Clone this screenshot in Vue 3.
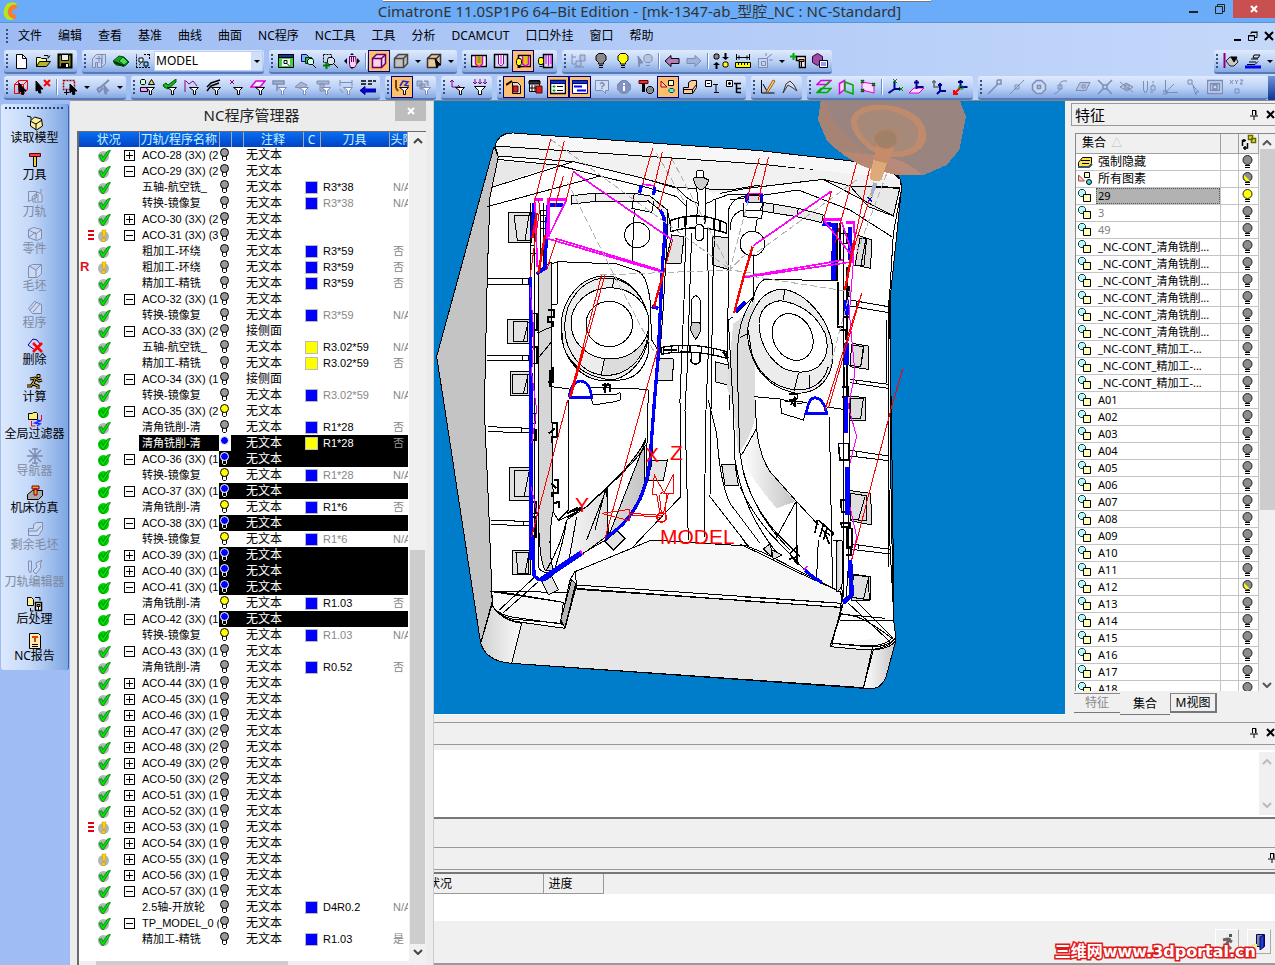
<script setup>
const menus = ['文件', '编辑', '查看', '基准', '曲线', '曲面', 'NC程序', 'NC工具', '工具', '分析', 'DCAMCUT', '口口外挂', '窗口', '帮助']

const D = '#7d8cb4'
const K = '#000'
const P = '#808'
const N = '#000090'
const funnel = (c = K, f = '#fff') => [['M5.5 8.5h9l-3 3v4h-2v-4z', f, c]]
const bulb = (f, s = K) => [['M5.5 .5h5l2.5 2.5v4l-2.5 2.5v1.5h-5v-1.5l-2.5-2.5v-4z', f, s], ['M6 12.5h4M6 14.5h4', 'none', s]]
const cube = (f, s) => [['M1.5 5.5l4-4h9v9l-4 4h-9z', f, s, 1.5], ['M1.5 5.5h9v9M10.5 5.5l4-4', 'none', s, 1.5]]

const icons = {
  new: [['M3.5 1.5h6l4 4v10h-10z', '#fff', K], ['M9.5 1.5v4h4', 'none', K]],
  open: [['M1.5 13.5v-9h4l1 1h5v3', '#ff9', K], ['M1.5 13.5l3-5h11l-4 5z', '#b5b52a', K], ['M9 2.5h4v2M15 2.5l-2 3', 'none', K]],
  save: [['M1.5 1.5h13v13h-13z', '#8a8a1e', K, 2], ['M4.5 1.5h7v6h-7z', '#eee', K], ['M4.5 10.5h7v4h-7z', K, K], ['M9 11h2v3H9z', '#fff', 'none']],
  part: [['M1.5 5.5l4-4h9v9l-4 4h-4v-5h-2v5h-3z', '#c6d4ef', D], ['M4.5 5.5h6v9M8 3v7M11 2v9', 'none', D]],
  green: [['M0 8l6-5 5 1 5 5-4 4-9-1z', '#1c9c1c', '#052'], ['M6 8l4-4 5 5-4 3z', '#4be04b', '#052'], ['M1 9l10 4', 'none', '#030', 2]],
  frames: [['M1.5 14.5v-13M1 14.5h14.5M9 1.5h6M14.5 1v5', 'none', K, 1, '2 1'], ['M4 5h4v4H4z', '#fff', K], ['M9 9h4v4H9z', '#6cf', K], ['M4 12l3-3', 'none', '#060']],
  fit: [['M.5 1.5h15v13H.5z', '#3fd13f', K], ['M.5 1.5h15v3H.5z', '#113a9c', K], ['M4 6h8v7H4z', '#fff', 'none'], ['M6 7.5h3v3H6zM9 10.5l3 3', '#dff', K]],
  zoomPrev: [['M1.5 1.5h5l2 2v5h-7z', '#7db5e8', N], ['M5.5 4.5h6v6h-6z', '#3b3', '#030'], ['M9.5 5.500h3l1 2v3l-1 1h-3l-2-1v-3zM12 11l4 4', '#cfe', K]],
  zoomIn: [['M1.5 1.5h8v8h-8z', 'none', K, 1, '2 1'], ['M6.5 4.5h4l2 2v3l-2 2h-4l-1-2v-3zM12 11l4 4', '#dde', K], ['M1 12.5h7M4.5 9v7', 'none', '#070', 2]],
  pan: [['M5.5 3.5h6l1 8-2 3h-4l-1-3z', '#fbd3f0', '#606'], ['M0 8l3-3v6zM16 8l-3-3v6zM8 0l2 2H6zM8 16l2-2H6z', K, 'none'], ['M7.5 4v5M9.5 4v5', 'none', '#606']],
  wire: cube('#fbd3f0', '#606'),
  shade: cube('#c2c2c2', '#444'),
  viewCube: [...cube('#e8c89c', '#333'), ['M9 6l6 6h-3l-1 3z', K, K]],
  lib1: [['M.5 2.5h15v11H.5z', '#fff', K, 1.5], ['M4.5 3v8l3.5 3 3.5-3V3', '#e0c800', '#d0d', 1.5], ['M6.500 3h3v7h-3z', '#999920', 'none']],
  lib2: [['M1.5 1.5h13v13h-13z', '#d8d8ff', K, 1.5], ['M5.5 2v9l2.5 2 2.5-2V2', '#fff', P], ['M8 2v9', 'none', '#d0d']],
  lib3: [['M3.5 2.5h12v11h-12z', '#fff', K, 1.5], ['M7.5 3v8l3 2 3-2V3', '#e0c800', '#d0d', 1.5], ['M2.5 5.5h3l1 2v3l-1 2h-3l-1-2v-3z', '#ff0', K], ['M2.5 14.5h3', 'none', K]],
  lib4: [['M6.5 1.5h9v13h-9z', '#d8d8ff', K, 1.5], ['M9 2v9M11.5 2v11M14 2v9', 'none', '#d0d'], ['M2.5 4.5h3l1 2v3l-1 2h-3l-1-2v-3z', '#ff0', K], ['M2.5 13.5h3', 'none', K]],
  treeOff: [['M1 1v10h6M1 4h4M3 14h10', 'none', D], ['M9 2h5v6H9zM5 8h5v5H5z', '#b8c4de', D]],
  bulbGray: bulb('#888'),
  bulbOn: bulb('#ff0'),
  pickOff: [['M1 3l5 7H3l-1 4z', D, D], ['M9 1.5h4l2 2v4l-2 2H9l-2-2v-4z', '#b8c4de', D], ['M9 12.5h4', 'none', D]],
  back: [['M1 8l6-5.5v3h8v5H7v3z', '#b97abb', K]],
  fwd: [['M15 8L9 2.5v3H1v5h8v3z', '#9eb4dc', D]],
  swap: [['M2 1h3l1 1v3l-1 1H2L1 5V2z', '#888', K], ['M11 9h3l1 1v3l-1 1h-3l-1-1v-3z', '#ff0', K], ['M12.5 0v4M3.5 12v4', 'none', K, 2], ['M9 4h7l-3.5 3zM0 12h7l-3.5-3z', K, 'none']],
  measure: [['M1.5 1v6M14.5 1v6M1 4.5h14M4 2.5v4M12 2.5v4', 'none', K], ['M.5 9.5h15v5H.5z', '#ff0', K], ['M3.5 10v2M6.5 10v2M9.5 10v2M12.5 10v2', 'none', K]],
  explodeOff: [['M1.5 5.5h9v9h-9zM4.5 8.5h4v4h-4z', '#c6d4ef', D], ['M10 5l5-4M12 7h4M9 3V0', 'none', D]],
  addTool: [['M3.5 0v7M0 3.5h7', 'none', '#0a0', 2], ['M6.5 3.5h9v11h-6v-7h-3z', '#eee', K, 1.5], ['M9 6.5h5v2H9zM11.5 9v5', '#f80', K]],
  assyList: [['M.5 3.5l5-3 5 3v6l-5 3-5-3z', '#a04aa8', '#303'], ['M7.5 7.5h8v7h-8z', '#fff', K], ['M9 10h5M9 12h5', 'none', '#33f']],
  mirror: [['M1.5 0v15', 'none', P, 2], ['M3 8l4-4 6 1 2 4-4 4H7z', '#c9c9c9', '#222'], ['M8 4h6l-3 5z', K, K]],
  layers: [['M9 2h6l-2 3H8zM6 6h7M4 9h7M2 11.5h8l3-3', 'none', K], ['M0 14h16', 'none', '#00f', 3]],
  selBox: [['M1.5 5.5l4-4h9v9l-4 4h-9zM1.5 5.5h9v9M10.5 5.5l4-4M5.5 2v9h9', 'none', '#f00'], ['M6 4l7 8h-3l1 3-2 1-1-4-2 2z', K, K]],
  unselect: [['M1 2l7 8H5l1 4-2 0-1-3-2 1z', K, K], ['M9 1l6 6M15 1L9 7', 'none', '#f00', 2]],
  selRect: [['M1.5 1.5h11v9h-11z', 'none', '#900', 1.5, '2 1'], ['M8 5l7 7h-3l1 3-2 1-1-4-2 2z', K, K], ['M2 13.5h5M4.5 11v5', 'none', K]],
  curveOff: [['M2 10l4-2 8-7M2 10l2 3 4-4', 'none', D, 2], ['M9 6l5 6h-3l1 3-2 0-1-4z', D, D]],
  fShapes: [['M1.5 .5h3l1 1v3l-1 1h-3l-1-1v-3z', '#cfc', K], ['M8.5 5.5l3-5 3 5z', '#dd6', K], ['M.5 8.5h7v4h-7z', '#f9f', K], ...funnel()],
  fFace: [['M1 6l3-2 2 2 8-6v3l-8 7-4-2z', '#1b1', '#050'], ...funnel()],
  fEdge: [['M1 1v12M2 2l3 3 4-3 4 5', 'none', P], ...funnel()],
  fCurve: [['M1 8l4-4 9-3M1 12l4-5 8-3', 'none', K, 1.5], ...funnel()],
  fPoint: [['M2 1l4 4M6 1L2 5', 'none', P], ...funnel()],
  fPlane: [['M6 2h9l-5 6H1z', '#ffe8ff', '#d0d', 1.5], ...funnel()],
  fG1: [['M1 2h11v3H1zM5 5v7', '#aab6d2', D, 1.5], ...funnel(D)],
  fG2: [['M1 8l6-5 6 3-3 4z', '#aab6d2', D], ...funnel(D)],
  fG3: [['M1 2h12v3H1zM4 5h4v7H4z', '#aab6d2', D], ...funnel(D)],
  fG4: [['M2 1v6M14 1v6M2 3.5h12M2 10l3 4', 'none', D], ...funnel(D)],
  fArrow: [['M1 2h5M8 2h4M13 2h3M1 5h5M8 5h4', 'none', K, 1.5], ['M0 11.5l5-4v2.5h11v3H5v2.5z', '#00d', N]],
  nc1: [['M2 1v8M2 9l2 3', 'none', '#740', 2], ['M6 7l3-5 5 1-3 3 4 1', 'none', '#22c', 1.5], ...funnel()],
  nc2: [['M1 2h5v5H1zM4 5h5v5H4zM8 2h4v5', '#aab6d2', D], ...funnel(D)],
  fUcs: [['M2 1v7h8M0 3l2-2 2 2M8 6l2 2-2 2', 'none', P], ...funnel()],
  fPts: [['M3 0v5M8 0v5M13 0v5M1 3l2 2 2-2M6 3l2 2 2-2M11 3l2 2 2-2', 'none', P], ['M2.5 7.5h11l-4 4v4h-3v-4z', '#fff', K]],
  toolWiz: [['M6.5 3.5h5l3 3v8h-8z', '#ddd', K], ['M0 6l6-4', 'none', K, 2], ['M7 7h5v6H7z', '#c22', '#600']],
  calc: [['M1.5 1.5h10v11h-10z', '#fff', K], ['M1 2h11v3H1z', '#334', K], ['M4 6v6M7 6v6M2 9h9', 'none', K], ['M8 7h6v7H8z', '#c22', '#600']],
  list: [['M.5 1.5h15v13H.5z', '#fff', K, 1.5], ['M.5 1.5h15v3H.5z', '#113aa0', N], ['M3 7h2v1H3zM3 11h2v1H3z', '#0a0', '#0a0'], ['M7 7.5h6M7 11.5h6', 'none', K]],
  bars: [['M.5 1.5h15v13H.5z', '#fff', N], ['M.5 1.5h15v3H.5z', '#113aa0', N], ['M2 7.5h8M5 11.5h9', 'none', '#00f', 2]],
  help: [['M1.5 1.5h13v10h-3v3l-3-3h-7z', '#cfdcf4', D], ['M6 5l2-1.5 2 1.5v1L8 7.5v1M8 9v1', 'none', D, 1.5]],
  info: [['M5.5 1.5h5l4 4v5l-4 4h-5l-4-4v-5z', '#7f92c2', D], ['M8 4v2M8 7v5', 'none', '#fff', 2]],
  toolGear: [['M1 1.5h9v3H1z', '#d33', '#600'], ['M5.5 5v8', 'none', K, 3], ['M10.5 7.5h3l2 2v3l-2 2h-3l-2-2v-3z', '#888', K]],
  shapes: [['M1 2v6h6z', '#fcc', '#a00'], ['M8.5 1.5h5v5h-5z', '#ffb', K], ['M10 9.5h3l1 1v2l-1 1h-3l-1-1v-2z', '#6ee', '#044']],
  solid: [['M1.5 8.5h5v-5l3-2h5v7l-4 6h-9z', '#fc9', K], ['M1.5 10.5h9l4-5M10.5 10v4', 'none', K]],
  treeMinus: [['M1.5 1.5h6v6h-6z', '#fff', K], ['M3 4.5h3M9 5.5h5M12 6v8M10 13.5h5', 'none', K]],
  treePlus: [['M.5 1.5h6v6h-6z', '#fff', K], ['M2 4.5h3M3.5 3v3M8 4.5h7M10.5 4v10M11 9.5h4M11 13.5h4', 'none', K, 1.5]],
  sketch: [['M1.5 1v13h13', 'none', K], ['M3 5l4 7 4-6', 'none', K], ['M6 13l7-12 2 1-7 11z', '#fd6', '#a50']],
  comp: [['M1 14l3-9 4-3 4 4 3 6-4-3-5-3z', '#dde', '#333']],
  pl1: [['M5 1.5h10l-4 4H1z', 'none', '#d0d', 1.5], ['M5 9.5h10l-4 4H1zM14 2L3 13', 'none', '#0a0', 1.5]],
  pl2: [['M1.5 4.5l5-3v9l-5 4z', '#fdf', '#d0d', 1.5], ['M7 3l8 3v9l-8-3z', 'none', '#0a0', 1.5]],
  pl3: [['M2 3l12 2v9L2 11z', '#fdf', '#d0d'], ['M1 1l3 3M4 1L1 4M12 4l3 3M15 4l-3 3M1 10l3 3M4 10l-3 3', 'none', '#050', 1.5]],
  ucs1: [['M7.5 10V2M7.5 10h7M7.5 10l-6 4', 'none', N, 2], ['M6 0l4 4M10 0L6 4M12 8l4 4M16 8l-4 4', 'none', '#080']],
  ucs2: [['M5 9h10l-5 5H0z', '#fdf', '#d0d'], ['M7.5 10V1M7.5 8h7M5 3.5h5', 'none', N, 2]],
  ucs3: [['M3 1v7h6M1 3h4', 'none', '#666', 1.5], ['M9 4v8h6M7 6h4M9 12l-3 3', 'none', N, 2]],
  ucs4: [['M7.5 9V1M7.5 8h7M5 3h5', 'none', N, 2], ['M7 9l-6 6M1 11v4h4', 'none', '#f00', 2], ['M6 7h4v3H6z', 'none', '#080']],
  p1: [['M1 15L11 5M11 1h3v4h-4v-3z', 'none', D, 1.5]],
  p2: [['M1 15L15 1M6 6h4v4H6z', 'none', D]],
  p3: [['M5.5 1.5h5l4 4v5l-4 4h-5l-4-4v-5zM6.5 6.5h3v3h-3z', '#c8d7f2', D, 1.5]],
  p4: [['M1 15q7-2 6-8t7-5M5 6h4v4H5z', 'none', D]],
  p5: [['M5 3.5h10l-4 8H1zM7 6h3v3H7z', '#b6c4e0', D]],
  p6: [['M1 1l5 5M15 1l-5 5M1 15l5-5M15 15l-5-5M6 6h4v4H6z', 'none', D, 1.5]],
  p7: [['M1 8l6-4 7 4-6 4zM1 3l13 10M6 6h4v4H6z', '#b6c4e0', D]],
  p8: [['M2.5 2v9l2 3 2-3V2M12 2v2M12 5v2M10 7h4v4h-4zM9 13h3', 'none', D]],
  p9: [['M2.5 14V1M2 13.5h13M3 13L11 5M0 12h4v3H0z', 'none', D]],
  p10: [['M3 1h4v4H3zM7 5l2 2M8 7l6 6h-3v3z', 'none', D]],
  p11: [['M.5 1.5h15v13H.5zM3.5 4.5h9v7h-9zM6 6h4v4H6z', '#c8d7f2', D, 1.5]],
  p12: [['M1 1l3 4M4 1L1 5M6 1l1.5 2L9 1M7.5 3v2M11 1h3l-3 4h3M6 10h4v4H6z', 'none', D]],
  readModel: [['M3.5 6l4-4 7 2 1 7-6 4-6-4z', '#ffef9a', K], ['M3 6l6 3 6-4M9 9v6M0 1l4 1v3', 'none', K]],
  cutter: [['M2.5 1.5h11v3h-11z', '#e44', '#600'], ['M6.5 4.5h3v10h-3z', '#fc3', K]],
  tpOff: [['M1.5 2.5h8v6l-8 4zM5 8l6-5 4 3v7H6z', '#ccd9f1', D], ['M8 5v7M11 5v7M14 0v4', 'none', D]],
  partOff: [['M1.5 3.5l5-2 8 2v9l-5 2-8-3z', '#ccd9f1', D], ['M2 4l7 4 5-4M9 8v6M2 11l7-5', 'none', D]],
  stockOff: [['M1.5 3.5l4-2h9v9l-4 4h-9zM2 3l7 4 5-5M9 7v7', '#ccd9f1', D]],
  procOff: [['M1.5 8.5l6-7 7 3v9h-9zM3 10l7-8M6 12l7-8', '#ccd9f1', D]],
  del: [['M1 8l5-6 4 1 3 4-5 6z', '#cfd6ff', N], ['M6 6l9 9M15 6l-9 9', 'none', '#f00', 2.5]],
  run: [['M10 .5h3v3h-3z', '#fc3', K], ['M3 5l5-1 4 3 3-1M8 5l-2 5 5 2v3M6 9l-2 3H0', 'none', K, 3], ['M3 5l5-1 4 3 3-1M8 5l-2 5 5 2v3M6 9l-2 3H0', 'none', '#fb2', 1]],
  gfilter: [['M1.5 2.5h4l1-1h3l1 1v6h-9z', '#ffef70', K], ['M14.5 4v5l-4 1M4.5 10v5h4', 'none', '#f00'], ['M10 9l3 1-5 2 5 1-3 2', 'none', '#22f', 1.5]],
  navOff: [['M8 0v16M0 8h16M2 2l12 12M14 2L2 14M5 1h6M5 15h6', 'none', D, 1.5]],
  sim: [['M.5 9.5l5-4h10v5l-4 4H.5z', '#aaa', K], ['M5 1h7v3H5zM7 4h3v6H7z', '#f93', '#700']],
  restOff: [['M1.5 6.5h5v-4l3-2h6v7l-4 6h-10zM2 9h8l4-5', '#ccd9f1', D]],
  tpEdit: [['M1.5 2v9l2 3 1-3V2zM6 12l4-4-1-4 6-3-2 4 1 3-5 7z', '#ccd9f1', D]],
  post: [['M.5 1.5h4l2 2v6h-6z', '#ffef90', K], ['M8 1.5h5v3M3.5 12v3h3', 'none', K], ['M8.5 6.5h6v8h-6z', '#fff', K, 1.5], ['M10 8.5h3v2h-3zM11.5 11v3', '#f60', K]],
  report: [['M2.5 .5h9l2 2v13h-11z', '#ffe9b5', K], ['M5 4h6M8 4v5', 'none', '#d40', 2], ['M5 11.5h6M5 13.5h6', 'none', K]],
}

const b = (i, label, active = false) => ({ t: 'b', i, label, active })
const dd = { t: 'd' }
const sep = { t: 's' }
const row1 = [
  [b('new', '新建'), b('open', '打开'), b('save', '保存')],
  [b('part', '零件'), b('green', '曲面模型'), b('frames', '坐标系'), { t: 'select' }],
  [b('fit', '适合窗口'), b('zoomPrev', '上一视图'), b('zoomIn', '放大'), b('pan', '平移'), sep, b('wire', '线框', true), b('shade', '着色'), dd, b('viewCube', '视角'), dd],
  [b('lib1', '显示一'), b('lib2', '显示二'), b('lib3', '显示三', true), b('lib4', '显示四')],
  [b('treeOff', '树'), b('bulbGray', '隐藏'), b('bulbOn', '显示'), b('pickOff', '拾取'), sep, b('back', '后退'), b('fwd', '前进'), sep, b('swap', '切换'), b('measure', '测量'), b('explodeOff', '炸开'), dd, b('addTool', '添加刀具'), b('assyList', '清单')],
]
const row1End = [b('mirror', '镜像'), b('layers', '图层'), dd]
const row2 = [
  [b('selBox', '选择'), b('unselect', '取消选择'), sep, b('selRect', '框选'), dd, b('curveOff', '曲线'), dd],
  ['fShapes', 'fFace', 'fEdge', 'fCurve', 'fPoint', 'fPlane', 'fG1', 'fG2', 'fG3', 'fG4', 'fArrow'].map((k, n) => b(k, '过滤 ' + (n + 1))),
  [b('nc1', '刀轨过滤', true), b('nc2', '毛坯过滤')],
  [b('fUcs', '坐标过滤'), b('fPts', '点过滤')],
  [b('toolWiz', '向导', true), b('calc', '计算表'), b('list', '列表', true), b('bars', '进程', true), b('help', '帮助'), b('info', '信息'), b('toolGear', '刀具设置'), b('shapes', '集合', true), b('solid', '实体'), b('treeMinus', '折叠'), b('treePlus', '展开')],
  [b('sketch', '草图'), b('comp', '复合曲线')],
  [b('pl1', '平行面'), b('pl2', '主平面'), b('pl3', '三点面'), sep, b('ucs1', '坐标一'), b('ucs2', '坐标二'), b('ucs3', '坐标三'), b('ucs4', '坐标四')],
]
const row2End = Array.from({ length: 12 }, (_, n) => b('p' + (n + 1), '捕捉 ' + (n + 1)))

const palette = [
  ['readModel', '读取模型'], ['cutter', '刀具'], ['tpOff', '刀轨', 1], ['partOff', '零件', 1], ['stockOff', '毛坯', 1],
  ['procOff', '程序', 1], ['del', '删除'], ['run', '计算'], ['gfilter', '全局过滤器'], ['navOff', '导航器', 1],
  ['sim', '机床仿真'], ['restOff', '剩余毛坯', 1], ['tpEdit', '刀轨编辑器', 1], ['post', '后处理'], ['report', 'NC报告'],
]

const G = '#9a9a9a', Y = '#ff0', B = '#00f'
const grp = (t, n, c, x = {}) => ({ toggle: t, name: 'ACO-' + n + ' (3X) (' + c, ...x })
const op = (name, tool, holder, x = {}) => ({ name, tool, holder, sw: B, ...x })
const M5 = '五轴-航空铣_', MC = '转换-镜像复', CJ = '粗加工-环绕', JJ = '精加工-精铣', QJ = '清角铣削-清'
const sel = { green: 1, sel: 1, bulb: B }
const yel = { green: 1, bulb: Y }
const rows = [
  grp('+', 28, 2), grp('-', 29, 2), op(M5, 'R3*38', 'N/A'), op(MC, 'R3*38', 'N/A', { dim: 1 }), grp('+', 30, 2),
  grp('-', 31, 3, { warn: 1, mark: 'bars' }), op(CJ, 'R3*59', '否'), op(CJ, 'R3*59', '否', { warn: 1, mark: 'R' }), op(JJ, 'R3*59', '否'),
  grp('-', 32, 1), op(MC, 'R3*59', 'N/A', { dim: 1 }),
  grp('-', 33, 2, { note: '接侧面' }), op(M5, 'R3.02*59', 'N/A', { sw: Y }), op(JJ, 'R3.02*59', '否', { sw: Y }),
  grp('-', 34, 1, { note: '接侧面' }), op(MC, 'R3.02*59', 'N/A', { dim: 1 }),
  grp('-', 35, 2, yel), op(QJ, 'R1*28', '否'), op(QJ, 'R1*28', '否', { ...sel, sw: Y, full: 1 }),
  grp('-', 36, 1, sel), op(MC, 'R1*28', 'N/A', { ...yel, dim: 1 }),
  grp('-', 37, 1, sel), op(QJ, 'R1*6', '否', yel),
  grp('-', 38, 1, sel), op(MC, 'R1*6', 'N/A', { ...yel, dim: 1 }),
  grp('+', 39, 1, sel), grp('+', 40, 1, sel), grp('-', 41, 1, sel), op(QJ, 'R1.03', '否', yel),
  grp('-', 42, 1, sel), op(MC, 'R1.03', 'N/A', { ...yel, dim: 1 }),
  grp('-', 43, 1), op(QJ, 'R0.52', '否'),
  grp('+', 44, 1), grp('+', 45, 1), grp('+', 46, 1), grp('+', 47, 2), grp('+', 48, 2), grp('+', 49, 2), grp('+', 50, 2),
  grp('+', 51, 1), grp('+', 52, 1), grp('+', 53, 1, { warn: 1, mark: 'bars' }), grp('+', 54, 1), grp('+', 55, 1, { warn: 1 }), grp('+', 56, 1),
  grp('-', 57, 1), op('2.5轴-开放轮', 'D4R0.2', 'N/A'),
  { toggle: '-', name: 'TP_MODEL_0 (' }, op(JJ, 'R1.03', '是'),
]

const sets = [
  { n: '强制隐藏', k: 'box', cjk: 1 }, { n: '所有图素', k: 'all', cjk: 1, half: 1 },
  { n: '29', on: 1, s: 1 }, { n: '3', dim: 1 }, { n: '49', dim: 1 },
  ...Array.from({ length: 6 }, () => ({ n: '_NC-CONT_清角铣削...' })),
  ...Array.from({ length: 3 }, () => ({ n: '_NC-CONT_精加工-...' })),
  ...Array.from({ length: 18 }, (_, i) => ({ n: 'A' + String(i + 1).padStart(2, '0'), half: i === 11 })),
]
</script>

<template>
  <div class="app">
    <header class="title">
      <span class="tip"></span>
      <svg class="logo" viewBox="0 0 15 18"><path d="M13 3Q5 0 3 8t7 9" fill="none" stroke="#b6e61e" stroke-width="4" /><path d="M14 5Q8 4 7 9t6 6" fill="none" stroke="#ff7a2a" stroke-width="4" /></svg>
      <h1>CimatronE 11.0SP1P6 64–Bit Edition - [mk-1347-ab_型腔_NC : NC-Standard]</h1>
      <button class="wb" aria-label="最小化"><svg viewBox="0 0 12 12"><path d="M1 9h9" stroke="#222" stroke-width="2" /></svg></button>
      <button class="wb" aria-label="还原"><svg viewBox="0 0 12 12"><path d="M1.5 3.5h7v7h-7zM3.5 3V1.5h7v7H9" fill="none" stroke="#222" /></svg></button>
      <button class="wb close" aria-label="关闭"><svg viewBox="0 0 12 12"><path d="M3 3l6 6M9 3l-6 6" stroke="#fff" stroke-width="2" /></svg></button>
    </header>

    <nav class="menu">
      <i class="grip"></i>
      <button v-for="m in menus" :key="m">{{ m }}</button>
      <span class="mdi">
        <button aria-label="最小化文档"><svg viewBox="0 0 12 12"><path d="M3 10h7" stroke="#000" stroke-width="2" /></svg></button>
        <button aria-label="还原文档"><svg viewBox="0 0 12 12"><path d="M1.5 5.5h6v5h-6zM1 6h7M4 4V2.5h6v5H8M4 2h7" fill="none" stroke="#000" /></svg></button>
        <button aria-label="关闭文档"><svg viewBox="0 0 12 12"><path d="M2 2l8 8M10 2l-8 8" stroke="#000" stroke-width="2" /></svg></button>
      </span>
    </nav>

    <div v-for="(bar, bi) in [{ g: row1, e: row1End }, { g: row2, e: row2End }]" :key="bi" class="bar">
      <div v-for="(g, gi) in [...bar.g, bar.e]" :key="gi" class="group" :class="{ last: gi === bar.g.length && bi === 0, fill: gi === bar.g.length && bi === 1 }">
        <i class="grip"></i>
        <template v-for="(x, xi) in g" :key="xi">
          <button v-if="x.t === 'b'" class="tb" :class="{ active: x.active }" :aria-label="x.label">
            <svg viewBox="0 0 16 16"><path v-for="(p, pi) in icons[x.i]" :key="pi" :d="p[0]" :fill="p[1]" :stroke="p[2]" :stroke-width="p[3] || 1" :stroke-dasharray="p[4]" /></svg>
          </button>
          <button v-else-if="x.t === 'd'" class="drop" aria-label="更多"></button>
          <i v-else-if="x.t === 's'" class="sep"></i>
          <span v-else class="combo"><select aria-label="坐标系"><option>MODEL</option></select></span>
        </template>
      </div>
      <button v-if="bi === 1" class="overflow" aria-label="工具栏选项"></button>
    </div>

    <main class="work">
      <aside class="side">
        <div class="palette">
          <i class="hgrip"></i>
          <button v-for="p in palette" :key="p[1]" :class="{ off: p[2] }">
            <svg viewBox="0 0 16 16"><path v-for="(q, qi) in icons[p[0]]" :key="qi" :d="q[0]" :fill="q[1]" :stroke="q[2]" :stroke-width="q[3] || 1" /></svg>
            <span>{{ p[1] }}</span>
          </button>
        </div>
      </aside>

      <section class="manager">
        <div class="mtitle"><h2>NC程序管理器</h2><button aria-label="关闭管理器"><svg viewBox="0 0 12 12"><path d="M3 3l6 6M9 3l-6 6" stroke="#fff" stroke-width="2" /></svg></button></div>
        <div class="mbody">
          <div class="mscroll">
            <div class="tree">
              <table class="ops">
                <colgroup><col class="c1"><col class="c2"><col class="c3"><col class="c4"><col class="c5"><col class="c6"><col class="c7"><col></colgroup>
                <thead><tr><th>状况</th><th class="l">刀轨/程序名称</th><th></th><th></th><th>注释</th><th>C</th><th>刀具</th><th class="l">头阶</th></tr></thead>
                <tbody>
                  <tr v-for="(r, i) in rows" :key="i" :class="{ sel: r.sel, full: r.full }">
                    <td class="st">
                      <div>
                        <span class="mark"><b v-if="r.mark === 'R'">R</b><svg v-else-if="r.mark" viewBox="0 0 8 12"><path d="M1 2h6M1 6h6M1 10h6" stroke="#e00010" stroke-width="2" /></svg></span>
                        <svg class="stat" viewBox="0 0 15 15">
                          <circle cx="6.5" cy="8.5" r="5.5" :fill="r.green ? '#00d000' : '#b4b4b4'" />
                          <path v-if="r.warn" d="M5 2h4l-1 7H6zM5 10.5h3v3H5z" fill="#ffd800" stroke="#b89000" stroke-width=".5" />
                          <path v-else d="M2 7.5l2.5-1 1.5 3 4.5-6.5 3-.5-7 11h-1.5z" fill="#00e800" stroke="#007a10" stroke-width=".8" />
                        </svg>
                        <button v-if="r.toggle" class="tog" :aria-label="r.toggle === '+' ? '展开' : '折叠'"><svg viewBox="0 0 11 11"><path :d="r.toggle === '+' ? 'M.5 .5h10v10H.5zM2 5.5h7M5.5 2v7' : 'M.5 .5h10v10H.5zM2 5.5h7'" fill="#fff" stroke="#000" /></svg></button>
                      </div>
                    </td>
                    <td class="nm">{{ r.name }}</td>
                    <td class="bl"><svg viewBox="0 0 11 14"><path d="M3.5 8h4v3.5l-1 1h-2l-1-1z" :fill="r.sel && !r.full ? '#000' : '#fff'" :stroke="r.sel ? '#fff' : '#000'" /><circle cx="5.5" cy="4.5" r="4" :fill="r.bulb || G" :stroke="r.sel ? '#fff' : '#000'" /></svg></td>
                    <td></td>
                    <td class="nt">{{ r.note || '无文本' }}</td>
                    <td class="sw"><i v-if="r.sw" :class="{ y: r.sw === Y }"></i></td>
                    <td class="tl" :class="{ dim: r.dim }">{{ r.tool }}</td>
                    <td class="hd">{{ r.holder }}</td>
                  </tr>
                </tbody>
              </table>
            </div>
            <div class="vs ms"><svg viewBox="0 0 10 6"><path d="M1 5l4-4 4 4" fill="none" stroke="#444" stroke-width="2" /></svg><i></i><svg viewBox="0 0 10 6"><path d="M1 1l4 4 4-4" fill="none" stroke="#444" stroke-width="2" /></svg></div>
          </div>
          <div class="hs"><i></i></div>
        </div>
      </section>

      <section class="right">
        <div class="upper">
          <div class="canvas">
            <svg viewBox="12 3 1893 1839" preserveAspectRatio="xMinYMin slice" fill="none" stroke="#000" stroke-width="3">
              <defs>
                <linearGradient id="sg"><stop offset="0" stop-color="#fff" /><stop offset="1" stop-color="#c4c4c4" /></linearGradient>
                <linearGradient id="sr"><stop offset="0" stop-color="#d0d0d0" /><stop offset="1" stop-color="#fafafa" /></linearGradient>
              </defs>
              <path d="M192 150Q205 98 250 99L990 152 1370 195Q1410 215 1415 260L1380 600 1380 1000 1390 1550 1398 1620 1367 1735Q1350 1765 1330 1765L1300 1765 245 1690Q165 1675 152 1630L45 930 20 770Z" fill="#fff" />
              <path d="M195 138L990 192 1410 240 1370 195 990 152 250 99Q205 98 195 138Z" fill="#f7f7f7" />
              <path d="M205 140L990 195 1180 212 1410 238 1390 350 1180 240 990 262 850 278 740 262 620 232 430 187 205 170Z" fill="#f1f1f1" stroke="none" />
              <path d="M192 140L205 170 180 290 172 520 163 930 175 1200 187 1510 152 1630 45 930 20 770Z" fill="#c4c4c4" />
              <path d="M205 182L370 196 182 262Z" fill="#e8e8e8" stroke="none" />
              <path d="M185 1510Q205 1560 275 1567L405 1585 437 1465 990 1505 1240 1523 1200 1640 1330 1650Q1385 1645 1398 1620L1367 1735Q1350 1765 1330 1765L245 1690Q165 1675 152 1630Z" fill="#e6e6e6" />
              <path d="M187 1510L152 1630Q170 1685 245 1690L275 1570Q205 1560 187 1510Z" fill="url(#sr)" />
              <path d="M1330 1650L1300 1765H1330Q1350 1765 1367 1735L1398 1620Q1385 1645 1330 1650Z" fill="url(#sg)" />
              <path d="M435 1415L665 1320 950 1338 1000 1358 1150 1435 1232 1475 1240 1510 440 1455Z" fill="#f7f7f7" />
              <path d="M440 1468L1236 1522M435 1415L420 1440 392 1570H405L440 1455M420 1440L440 1465" />
              <path d="M185 1475L400 1507 392 1570 245 1557Q190 1540 187 1510Z" fill="#f7f7f7" />
              <path d="M180 1473L435 1478M180 1473L240 1480 400 1507M208 1530L312 1433M218 1540L325 1445M185 1515Q205 1550 275 1555L400 1573" />
              <path d="M392 1560L425 1440 437 1450 405 1583Z" fill="#b5b5b5" />

              <!-- upper left quadrant -->
              <path d="M208 168L430 185 620 230 740 262Q800 335 850 300L900 282H990M200 178L380 195 510 228 650 262 740 290 770 320M185 262L430 185M172 320L510 228M640 235L730 262 900 270 990 255M205 170L180 290 172 520 163 930 175 1200 187 1510M195 138L205 170" />
              <path d="M425 287L490 280 610 280 660 288 712 330V400L690 330 655 303 490 305 425 312Z" fill="#eee" />
              <path d="M495 280V305M613 280L606 325 665 337 672 303M613 330L606 490M340 500L385 485 560 492 620 512Q650 520 660 600L665 720 690 760" />
              <circle cx="622" cy="405" r="38" />
              <path d="M325 520L340 500 365 487V900L370 1230Q350 1330 370 1415L345 1410Q325 1380 325 1200Z" fill="#d6d6d6" />
              <path d="M365 485V615L382 612V487M365 860L425 868M480 862L655 868M490 882H560Q578 870 570 900L555 905 490 915 482 890Z" />
              <ellipse cx="525" cy="685" rx="132" ry="157" fill="#ececec" /><ellipse cx="530" cy="680" rx="126" ry="146" />
              <path d="M555 640L645 720Q630 820 520 825L525 765Z" fill="#dcdcdc" stroke="none" />
              <ellipse cx="540" cy="670" rx="117" ry="107" fill="#fff" /><ellipse cx="538" cy="672" rx="70" ry="68" />
              <path d="M553 530L547 563M523 777L513 828M395 690L400 740Q430 820 530 838T655 760V670" />
              <g fill="#e2e2e2">
                <path d="M235 337H305V427H235ZM252 345H300V420H262Z" /><path d="M233 657H297V730H233ZM250 665H292V724H250Z" /><path d="M242 813H297V885H242ZM248 822H292V880H248Z" /><path d="M237 1102H300V1202H237ZM252 1110H298V1190H255Z" /><path d="M248 1352H300V1422H248ZM258 1358H296V1420H264Z" />
                <path d="M725 405L762 410 753 490H707ZM848 410L895 412V508L848 495ZM685 775L730 777 728 842H680ZM855 785L895 795V855L855 845ZM665 1083L712 1080 700 1140H655ZM875 1093L915 1095 925 1155H885Z" /><path d="M525 1325L560 1290 585 1315 550 1350ZM335 1445L365 1430 385 1470 355 1485Z" />
              </g>
              <path d="M285 420L298 340M280 724L295 665M280 880L295 822M282 1190L297 1115M285 1420L297 1360" />
              <path d="M172 535H295V552H172M277 535V552M172 765H295V780H172M277 765V780M175 980L300 985V998L175 995M275 985V997M182 1260L300 1265V1278L182 1273M280 1263V1277" />
              <path d="M300 310V1380M313 320V1420M325 520V1400Q330 1420 370 1420M340 310V500M332 330V510M350 330H330M350 345H332M348 365H330M345 385H332M300 435H315M300 460H320M312 540V660M320 700L365 680M320 780L365 725" />
              <path d="M300 640H320V690H300M302 740H320V790H302M300 940H315V970H300M302 990H318V1020H302M300 1205H318V1240H300M303 1250H318V1310H303" stroke-width="5" />
              <path d="M355 630H372V650H355V665H368V680M360 810V860M368 800V845H355M365 970H380V1010H365V1030M357 1000L375 985M372 1140H385V1180H365V1190M365 1150L380 1165M372 1210L388 1205V1225M412 1240L440 1225V1260M412 1252L440 1238M425 1235L455 1225 462 1250 440 1255M420 1260V1278M450 1220V1250M480 1300V1340M490 1310L475 1350 495 1330M470 1345L492 1325M525 850V880M515 855H540V875M520 870L535 850" stroke-width="6" />
              <path d="M415 900V1230L385 1260M648 1015Q620 1080 530 1162L470 1220 385 1262 370 1235" /><path d="M648 1020Q610 1090 530 1162L535 1305 475 1350 370 1420Q400 1330 410 1260L470 1220 530 1165Q620 1080 645 1040L643 1150Q610 1260 535 1310Z" fill="url(#sg)" />
              <path d="M527 1165L495 1290M532 1165V1310M530 1165L470 1320M410 1260Q395 1330 350 1410M440 1250L415 1390M655 870L648 1150Q620 1250 535 1315L340 1430M712 400L700 620 690 760 670 920 665 1100" />

              <!-- centre ridge and ejector pins -->
              <path d="M770 300L762 600 750 900 752 1190 605 1345M785 400L772 800 765 930 775 1320M832 380L837 700 828 930 822 1315M857 300L848 560 843 930 840 1190 955 1338M712 330L720 370M895 350V500L893 760 900 930" />
              <path d="M798 250L805 310 800 350H827V250Z" fill="#fff" /><path d="M790 235Q812 225 836 240Q830 265 812 270Q795 262 790 235Z" fill="#ccc" /><circle cx="810" cy="222" r="12" fill="#fff" />
              <path d="M720 362Q805 330 890 370V400Q805 370 722 395ZM745 352V385M765 348V380M850 355V388M870 362V395M800 345V372M825 345V372" stroke-width="4" /><path d="M795 380Q808 365 820 380V415Q807 430 795 415Z" fill="#fff" />
              <path d="M785 670Q797 660 810 670Q820 690 797 718Q775 690 785 670Z" fill="#ccc" /><path d="M785 600Q797 575 810 600V668H785Z" fill="#fff" />
              <path d="M695 742Q790 725 890 755V775Q790 745 695 762ZM700 742V765M725 738V760M745 737V758M850 745V765M780 738V758M815 738V758M785 760L783 785Q797 800 810 785V760M860 390L892 400" stroke-width="4" />
              <path d="M880 755L893 775M700 750H740" stroke-width="7" />

              <!-- upper right quadrant -->
              <g transform="translate(930 0)">
                <path d="M330 258L480 262 460 348 385 320Z" fill="#e8e8e8" />
                <path d="M-60 280L20 265 250 238 330 258 480 265M-30 300L175 270 330 330 455 410M250 238L460 348M480 240L485 265 460 400 448 600 455 1000 462 1550M-35 395V330Q-20 290 20 288L70 290" />
                <path d="M70 308L100 312 175 325 250 345 245 368 170 350 60 332Z" fill="#e8e8e8" /><path d="M100 312V335M175 325L170 350M10 310V350L65 355 70 310M65 332H15M-30 390Q-30 340 10 330" />
                <path d="M26 285H62V308H26Z" fill="#ddd" stroke-width="4" />
                <path d="M52 356L45 395M40 465V890M75 538L295 542M75 538Q45 550 35 620L25 720M45 585L-10 640" /><circle cx="37" cy="431" r="37" />
                <path d="M45 590Q20 650 -20 670L-40 860 -20 920 -5 1065Q50 980 45 930Z" fill="#dcdcdc" stroke="none" />
                <path d="M-20 650L-35 660 -20 930 -15 1080Q10 1240 120 1370M45 580L15 640Q-5 680 -8 760L-5 930 0 1060Q20 1220 150 1350M0 712L25 700" />
                <path d="M130 567Q70 570 45 625Q10 680 30 750Q60 860 170 880Q250 880 275 800Q290 730 250 660Q200 580 130 567Z" fill="#ececec" />
                <path d="M120 602Q60 610 57 670Q60 760 130 805Q190 830 235 800Q275 760 255 700Q215 615 120 602Z" fill="#fff" /><path d="M25 690L35 760Q70 860 170 870Q245 870 265 800" />
                <ellipse cx="158" cy="711" rx="58" ry="73" transform="rotate(-28 158 711)" /><path d="M135 567L130 600M175 820L162 872M210 825L207 868" />
                <path d="M43 890L120 897 150 905M170 910L200 908M255 920L310 928M120 897L125 940 190 960 200 930M135 905H190" />
                <path d="M295 545L293 680H310V545M310 390V930M320 500V930M300 400H320V430H300M312 560H327V590M313 650H327M312 800V860M300 690H318V720M320 520V560M305 860H325V890H305M300 370V480M290 370V540" stroke-width="5" />
                <path d="M350 405L395 420 392 505 345 495M360 415H380L372 495H345ZM335 730L385 738V808L330 800M335 735L370 740 362 800 330 797ZM325 888L377 893V960H330M330 895H370L362 955H330Z" fill="#ddd" />
                <path d="M362 500L378 415M362 800L372 740M330 600L445 620V638L330 618M350 603V620M330 838L445 853V865L330 848M350 840V850M440 660V850M445 600V1400" />
                <path d="M148 882H172V895L155 905 165 920M152 915L166 890" stroke-width="5" />
              </g>

              <!-- lower right quadrant -->
              <g transform="translate(930 900)">
                <path d="M50 85L5 170Q20 220 110 325L165 305 90 215Q55 150 50 85Z" fill="url(#sg)" stroke="none" />
                <path d="M45 0L50 90Q60 170 90 215L170 305 235 375M50 85L5 165M168 305L105 420M168 305V440M0 260Q30 330 90 400L195 510M10 220Q40 320 110 400L180 470M-95 0L-70 100Q-60 250 -30 310L60 430M235 420L230 530M268 50L275 420 278 565M0 405L20 435" />
                <path d="M0 432L110 485 180 520 300 575L310 610 270 740 380 750Q450 745 465 715M275 730L380 738Q440 738 460 710M305 615L275 738M275 730L300 640 350 650Q400 670 462 720Q430 745 380 740Z" fill="#f7f7f7" />
                <path d="M325 610L450 725M345 600L460 715M300 642L435 655M300 660H462M0 590L305 610M0 602L305 622M305 560Q310 600 300 620M398 740L370 865" />
                <path d="M290 425Q300 415 308 425V540Q305 570 290 575Z" fill="url(#sr)" /><path d="M310 0V590M330 0L325 500 318 600M278 420H295" />
                <path d="M70 447L92 430 95 470ZM95 450L125 465 100 478ZM330 272L392 280 395 375 330 362M330 280L378 287V362L332 358ZM335 522L392 530V600L335 592M340 525L385 530 388 600H335Z" fill="#ddd" />
                <path d="M355 360L375 290M370 600L385 535M325 150L445 168V182L330 168M348 153V168M335 432L450 448V462L335 448M355 435V448M445 0L448 400 462 660" />
                <path d="M295 130H325V180H300ZM310 100V190M302 300H325V335H305ZM302 368H330V380H305ZM320 385H335V440H320ZM318 445H333V465H318M232 360L225 400M235 360L280 400 275 408M250 375L240 410M262 382L250 420M245 390L270 405M255 400L268 432M150 460L170 440V490M155 470L175 495M148 478L172 470M148 0H165V20" stroke-width="5" />
              </g>

              <!-- machined regions -->
              <g stroke="#0000ff" stroke-width="10">
                <path d="M312 308L305 415M353 315L345 505 320 522M355 315H400M302 530L301 900M305 655V710M303 820V1380M308 1305L312 1425Q325 1445 345 1438L455 1355M628 280L635 255M670 285L675 262M690 330Q708 350 705 400L697 500 685 760 672 920 660 1080Q645 1240 525 1315M665 620L685 625M950 285V305M915 635L945 605" />
                <path d="M335 1438L455 1358" stroke-width="16" />
                <path d="M420 892H485Q480 845 452 843Q425 845 418 888ZM1128 940H1190Q1180 895 1155 893Q1135 895 1130 935Z" stroke-width="8" />
                <path d="M956 280L952 308M994 280L996 308" stroke-width="7" />
                <path d="M1213 370L1210 540M1178 370L1220 378M1260 380V480M1250 600V645M1250 730V795M1248 890V1000M1252 1100V1245M1260 1380L1265 1485 1240 1508" stroke-width="14" />
                <path d="M1125 1410L1150 1432 1175 1447" />
              </g>
              <g stroke="#ff00ff" stroke-width="5">
                <path d="M312 298H340M352 297H408M355 300L350 415 700 517M430 215L728 420M408 303L358 405M375 415L690 510M635 252L675 258M955 280H1000M315 305L322 500M970 437L1205 273M940 533L1270 485M945 530L1240 480M1180 357H1230M1235 367L1270 470M1182 362L1268 470M1250 365H1272V400M1275 395L1268 490" />
                <path d="M300 560L312 700 305 820 320 930 305 1030M303 1160L322 1240 308 1300M1272 460L1258 640 1275 820 1255 920 1280 1010 1260 1090M1260 1220L1280 1310 1265 1380" stroke-width="3" />
                <path d="M450 1352L460 1365M1120 1410L1132 1398" />
                <path d="M312 298H340M352 299H408M354 300V410M1180 357H1232M1248 367H1272" stroke-width="9" />
              </g>
              <g stroke="#b0b0b0" stroke-dasharray="20 9">
                <path d="M362 118L900 508M412 245L550 520 680 770M510 525L900 510 990 522M725 175L900 508M680 160L760 300M940 525L1260 575M970 440L900 508M1280 240L970 465M1380 195L1280 460M955 300L900 508M1262 570L1200 800" />
              </g>
              <g stroke="#f00">
                <path d="M362 118L312 310M403 123L355 310M400 228L375 320M430 215L408 303M668 145L637 255M697 155L672 262M725 175L685 330M515 525L420 890M525 525L425 885M413 900L305 1310M640 900L525 1315M728 420L672 625M685 740L640 900M988 175L950 300M1015 172L985 300M1205 273L1180 360M1280 188L1215 430M1322 188L1245 560M1318 300L1260 480M1295 580L1195 925M1287 600L1185 930M1418 808L1385 920 1265 1380M325 300L330 320 300 530M380 415L350 510" />
                <path d="M345 405L325 520M320 340L307 415M700 520L672 620M968 440L940 533 912 640M1272 425L1245 570M462 740L420 890" stroke-width="7" />
                <path d="M695 1252L600 1245 597 1262 515 1240 600 1228 597 1248M695 1246L600 1240M690 1240L680 1183 667 1183 673 1125 700 1175 690 1182M700 1240L715 1180 700 1182 730 1122V1180L718 1182M694 1240L688 1185M705 1240L710 1183" />
                <circle cx="695" cy="1252" r="14" stroke-width="5" />
              </g>
              <g class="axis"><text x="645" y="1085">X</text><text x="720" y="1081">Z</text><text x="435" y="1235">Y</text><text x="690" y="1331">MODEL</text></g>

              <!-- spindle and tool -->
              <g transform="translate(930 0)" stroke="none">
                <path d="M242 3L234 60 260 120Q310 175 385 205L470 225 550 226 620 195 658 150 678 50 660 3Z" fill="#a3857a" fill-opacity=".94" />
                <path d="M300 153Q340 190 385 205L470 225H545Q500 175 400 165Z" fill="#c98f78" fill-opacity=".6" />
                <path d="M242 3L234 60 260 120Q310 175 385 205L470 225H500Q300 140 255 3Z" fill="#b9826a" fill-opacity=".45" />
                <path d="M335 50Q325 100 390 150Q470 190 530 155Q570 130 555 85Q540 40 470 20Q370 0 335 50Z" fill="#c08a6c" />
                <path d="M355 50Q340 90 400 140Q470 170 520 140Q550 100 520 65Q430 0 355 50Z" fill="#a78979" />
                <path d="M410 130L400 190H440L465 145Z" fill="#c68b68" /><ellipse cx="437" cy="117" rx="34" ry="28" fill="#9f8069" stroke="#b9805f" stroke-width="4" />
                <path d="M400 180L388 235Q405 250 425 240L440 190Z" fill="#ddaa78" /><path d="M400 247L390 285 398 290 412 250Z" fill="#a9add0" /><path d="M388 285L393 295" stroke="#ee0" stroke-width="5" /><path d="M383 292L396 304M396 292L383 304" stroke="#00f" stroke-width="3" />
              </g>
            </svg>
          </div>

          <aside class="features">
            <div class="cap big"><span>特征</span><svg class="pin" viewBox="0 0 10 12"><path d="M3 1.5h4v5M3.5 1v5M1 7h8M5 7v4M6.5 1v5" fill="none" stroke="#000" /></svg><svg class="x" viewBox="0 0 10 12"><path d="M1 2l7 7M8 2L1 9" stroke="#000" stroke-width="2" /></svg></div>
            <div class="flist">
              <table class="sets">
                <colgroup><col><col class="s2"><col class="s3"></colgroup>
                <thead><tr><th>集合 <small>△</small></th><th></th><th><svg class="hi" viewBox="0 0 16 18"><path d="M7.5 1.5h4v4h-4zM10.5 4.5h4v4h-4z" fill="#ee3" stroke="#660" stroke-width="1.5" /><path d="M1.5 12V6.5H5M3 5v3M6.5 9v5H2M4 12v4" fill="none" stroke="#000" stroke-width="1.5" /></svg></th></tr></thead>
                <tbody>
                  <tr v-for="(s, i) in sets" :key="i" :class="{ cjk: s.cjk, dim: s.dim, chosen: s.s }">
                    <td><div>
                      <svg viewBox="0 0 16 14">
                        <template v-if="s.k === 'box'"><path d="M1.5 7.5l4-5h9v6l-3 3h-10z" fill="#ffe34a" stroke="#000" /><path d="M1 12h11l3-3" fill="none" stroke="#357" stroke-width="2" /><path d="M4 5.5h9M5 8.5h7" stroke="#000" /></template>
                        <template v-else-if="s.k === 'all'"><path d="M1.5 3v6h6z" fill="#fcc" stroke="#a44" /><path d="M7.5 .5h5v5h-5z" fill="#ffb" stroke="#000" /><circle cx="12" cy="10" r="2.5" fill="#4dd" stroke="#000" /></template>
                        <template v-else><path d="M3.5 .5h3l2 2v3l-2 2h-3l-2-2v-3z" fill="#bff5f5" stroke="#044" /><path d="M6.5 5.5h7v7h-7z" fill="#ffffb8" stroke="#000" /></template>
                      </svg><span>{{ s.n }}</span></div></td>
                    <td></td>
                    <td class="fb"><svg viewBox="0 0 11 14"><circle cx="5.5" cy="5" r="4.5" :fill="s.on ? '#ff0' : '#8c8c8c'" stroke="#222" /><path v-if="s.half" d="M2 3v3l2 3h4z" fill="#ff0" /><path d="M3 10.5h5M3 12.5h5" stroke="#000" /></svg></td>
                  </tr>
                </tbody>
              </table>
              <div class="vs fs"><svg viewBox="0 0 10 6"><path d="M1 5l4-4 4 4" fill="none" stroke="#555" stroke-width="2" /></svg><i></i><svg viewBox="0 0 10 6"><path d="M1 1l4 4 4-4" fill="none" stroke="#555" stroke-width="2" /></svg></div>
            </div>
            <div class="tabs"><button class="t1">特征</button><button class="t2">集合</button><button class="t3">M视图</button></div>
          </aside>
        </div>

        <div class="lower">
          <div class="cap"><svg class="pin" viewBox="0 0 10 12"><path d="M3 1.5h4v5M3.5 1v5M1 7h8M5 7v4M6.5 1v5" fill="none" stroke="#000" /></svg><svg class="x" viewBox="0 0 10 12"><path d="M1 2l7 7M8 2L1 9" stroke="#000" stroke-width="2" /></svg></div>
          <div class="out"><div class="vs os"><svg viewBox="0 0 10 6"><path d="M1 5l4-4 4 4" fill="none" stroke="#bbb" stroke-width="2" /></svg><svg viewBox="0 0 10 6"><path d="M1 1l4 4 4-4" fill="none" stroke="#bbb" stroke-width="2" /></svg></div></div>
          <div class="cap two"><svg class="pin" viewBox="0 0 10 12"><path d="M3 1.5h4v5M3.5 1v5M1 7h8M5 7v4M6.5 1v5" fill="none" stroke="#000" /></svg></div>
          <table class="prog"><thead><tr><th class="a">状况</th><th class="c">进度</th><th></th></tr></thead><tbody><tr><td colspan="3"></td></tr></tbody></table>
          <div class="foot">
            <button aria-label="停止"><svg viewBox="0 0 16 16"><path d="M10 0h3v3h-3z" fill="#555" /><path d="M11 4L5 15M4 6l4-1 5 3M7 10l5 5M3 14h3" fill="none" stroke="#666" stroke-width="3" /></svg></button>
            <button aria-label="退出"><svg viewBox="0 0 16 16"><path d="M5.5 .5h8v12h-8z" fill="#888" stroke="#000080" /><path d="M9 3l4-2v12l-4 3z" fill="#1d3fc0" stroke="#000080" /><path d="M0 11h5v4" fill="none" stroke="#ee8" stroke-width="2" /></svg></button>
          </div>
          <div class="water">三维网www.3dportal.cn</div>
        </div>
      </section>
    </main>
  </div>
</template>

<style>
body { background: #a0bdf4; }
</style>

<style scoped>
* { box-sizing: border-box; }
.app { height: 100vh; display: flex; flex-direction: column; overflow: hidden; font: 12px/16px "Noto Sans", "Noto Sans CJK SC", sans-serif; color: #000; background: linear-gradient(90deg, #9ebcf3, #c4d8fa); }
button { border: 0; padding: 0; margin: 0; background: none; font: inherit; color: inherit; }
svg { display: block; }
.canvas svg, .tog svg, .mark svg { shape-rendering: crispEdges; }
h1, h2 { margin: 0; font-weight: 400; }
table { border-collapse: collapse; table-layout: fixed; width: 100%; }
td, th { padding: 0; font-weight: 400; text-align: left; white-space: nowrap; overflow: hidden; }

.title { flex: none; height: 23px; background: #6aacf7; border-bottom: 1px solid #5a94d6; display: flex; align-items: flex-start; position: relative; }
.tip { position: absolute; top: 0; left: 30%; right: 27%; height: 2px; background: #fff; border-bottom: 1px solid #777; }
.logo { width: 15px; height: 18px; margin: 2px 0 0 3px; }
.title h1 { flex: 1; text-align: center; font-size: 15px; line-height: 22px; color: #333; padding-left: 80px; white-space: nowrap; }
.wb { width: 26px; height: 18px; display: grid; place-items: center; }
.wb svg, .mdi svg { width: 12px; height: 12px; }
.wb.close { width: 42px; background: #c85050; }

.menu { flex: none; height: 27px; display: flex; align-items: center; gap: 16px; padding-left: 6px; line-height: 22px; padding-bottom: 2px; }
.menu .grip { margin-right: -6px; }
.mdi { margin-left: auto; display: flex; gap: 4px; align-items: center; }
.grip { flex: none; width: 2px; height: 14px; background: repeating-linear-gradient(#35507f 0 2px, transparent 2px 4px); }

.bar { flex: none; display: flex; gap: 5px; padding-left: 4px; height: 25px; }
.bar + .bar { height: 26px; padding-top: 1px; }
.group { height: 24px; display: flex; align-items: center; padding: 0 1px 0 2px; border-radius: 3px; background: linear-gradient(#dfeafd, #b9d0f5 55%, #85a8e2); border-bottom: 2px solid #5878b8; }
.group .grip { margin-right: 2px; }
.tb { width: 22px; height: 22px; display: grid; place-items: center; }
.tb svg { width: 16px; height: 16px; }
.tb.active { background: #fdc06e; border: 1px solid #000080; }
.drop { width: 11px; height: 20px; display: grid; place-items: center; }
.drop::after, .combo::after { content: ""; border: 3px solid transparent; border-top-color: #000; border-bottom: 0; }
.sep { width: 1px; height: 16px; margin: 0 2px; background: #6a8ccb; box-shadow: 1px 0 #fff; }
.combo { width: 109px; height: 20px; background: #fff; display: flex; align-items: center; position: relative; }
.combo::after { position: absolute; right: 3px; border-width: 3px 3px 0; box-sizing: content-box; }
.combo select { flex: 1; height: 20px; border: 0; border-right: 12px solid #cfdff8; background: #fff; appearance: none; padding: 0 2px; font: 12px/18px "Noto Sans", sans-serif; outline: 1px solid #b8cef2; outline-offset: -1px; }
.last { margin-left: auto; border-radius: 3px 0 0 3px; padding-right: 0; }
.fill { flex: 1; }
.overflow { width: 7px; height: 24px; margin-left: -5px; background: linear-gradient(#6f95dc, #0a3590); }

.work { flex: 1; min-height: 0; display: flex; margin-top: -1px; }
.side { flex: none; width: 70px; background: #9fbdf4; padding: 4px 1px 0; }
.palette { width: 68px; padding: 3px 0 2px; border-radius: 3px; border-right: 1px solid #3f64ac; background: linear-gradient(90deg, #dce9fd, #c3d8f9 45%, #7ea6e2); display: flex; flex-direction: column; }
.hgrip { height: 2px; margin: 0 4px 4px; background: repeating-linear-gradient(90deg, #223a78 0 2px, transparent 2px 4px); }
.palette button { height: 37px; display: flex; flex-direction: column; align-items: center; line-height: 14px; white-space: nowrap; }
.palette svg { width: 16px; height: 16px; margin-top: 2px; }
.palette .off { color: #7e8aa0; }

.manager { flex: none; width: 364px; background: #ececec; border-top: 1px solid #999; border-right: 1px solid #ccc; padding: 0 7px; display: flex; flex-direction: column; }
.mtitle { display: flex; height: 30px; flex: none; }
.mtitle h2 { flex: 1; text-align: center; font-size: 15px; line-height: 28px; color: #222; padding-left: 31px; }
.mtitle button { width: 31px; height: 20px; background: #bdbdbd; display: grid; place-items: center; }
.mtitle button svg { width: 12px; height: 12px; }
.mbody { flex: 1; min-height: 0; display: flex; flex-direction: column; border: solid #6b6b6b; border-width: 1px 0 0 2px; background: #fff; }
.mscroll { flex: 1; min-height: 0; display: flex; overflow: hidden; }
.tree { flex: 1; min-width: 0; padding-right: 1px; }
.ops .c1 { width: 60px; } .ops .c2 { width: 80px; } .ops .c3 { width: 12px; } .ops .c4 { width: 12px; } .ops .c5 { width: 60px; } .ops .c6 { width: 17px; } .ops .c7 { width: 69px; }
.ops th { height: 15px; line-height: 15px; text-align: center; color: #c4f4ff; background: linear-gradient(#0a6cf0, #0044c4); border-right: 1px solid #a8a8a8; }
.ops th.l { text-align: left; text-overflow: clip; padding-left: 1px; }
.ops td { height: 16px; line-height: 16px; }
.st div { display: flex; align-items: center; height: 16px; }
.mark { width: 18px; height: 14px; padding-left: 8px; }
.mark svg { width: 8px; height: 12px; margin-top: 1px; }
.mark b { display: block; color: #e01020; font: bold 13px/14px "Liberation Sans", sans-serif; margin-left: -8px; padding-left: 1px; }
.stat { width: 15px; height: 15px; }
.tog { margin-left: 12px; }
.tog svg { width: 11px; height: 11px; }
.nm { font-family: "Liberation Sans", "Noto Sans CJK SC", sans-serif; font-size: 11px; }
.ops td.nm { padding-left: 3px; text-overflow: clip; }
.bl svg { width: 11px; height: 14px; }
.ops td.nt { padding-left: 3px; }
.ops td.sw { padding-left: 2px; }
.sw i { display: block; width: 13px; height: 13px; background: #00f; border: 1px solid #bbb; }
.sw i.y { background: #ff0; }
.ops td.tl { padding-left: 3px; }
.tl, .hd { font-family: "Liberation Sans", "Noto Sans CJK SC", sans-serif; font-size: 11px; }
.ops td.hd { padding-left: 4px; text-overflow: clip; }
.dim, .hd { color: #888; }
.sel td:nth-child(n+3), .full td.nm { background: #000; color: #fff; }
.sel td.hd { color: #999; }
.full td.bl { background: #fff; }
.vs { flex: none; width: 16px; background: #f0f0f0; display: flex; flex-direction: column; align-items: center; }
.vs svg { width: 10px; height: 6px; }
.vs i { width: 15px; background: #cdcdcd; }
.ms { padding: 6px 0 6px; justify-content: space-between; width: 17px; }
.ms i { margin-top: auto; height: 394px; margin-bottom: 5px; }
.hs { height: 4px; flex: none; background: #f0f0f0; }
.hs i { display: block; width: 192px; height: 4px; margin-left: 17px; background: #cdcdcd; }

.right { flex: 1; min-width: 0; display: flex; flex-direction: column; background: #f0f0f0; }
.upper { flex: 1; min-height: 0; display: flex; border-top: 1px solid #888; }
.canvas { flex: 1; min-width: 0; background: #007dca; overflow: hidden; border-bottom: 1px solid #fff; }
.canvas svg { width: 100%; height: 100%; }
.axis text { font: 63px "Liberation Sans", sans-serif; fill: #f00; stroke: none; }
.features { flex: none; width: 210px; padding: 2px 0 0 6px; display: flex; flex-direction: column; }
.cap { flex: none; height: 23px; border: solid #999; border-width: 1px 0; display: flex; align-items: center; gap: 7px; justify-content: flex-end; }
.cap.big { border-left: 1px solid #999; font-size: 15px; }
.cap.big span { margin-right: auto; padding-left: 3px; }
.cap .pin, .cap .x { width: 10px; height: 12px; }
.cap .x { margin-right: -1px; }
.flist { flex: 1; min-height: 0; margin: 7px 0 0 4px; display: flex; border: solid #888; border-width: 1px 0 0 1px; overflow: hidden; background: #fff; }
.sets { flex: 1; width: auto; align-self: flex-start; }
.sets .s2 { width: 18px; } .sets .s3 { width: 20px; }
.sets th { height: 19px; background: #f0f0f0; border-right: 1px solid #a0a0a0; border-bottom: 1px solid #a0a0a0; padding-left: 6px; }
.sets th:last-child { padding: 0 0 0 2px; }
.sets th small { color: #bbb; font-size: 11px; margin-left: 2px; }
.hi { width: 16px; height: 18px; }
.sets td { height: 17px; line-height: 16px; font-size: 11px; border-right: 1px solid #c4c4c4; border-bottom: 1px solid #c4c4c4; }
.sets td div { display: flex; align-items: center; height: 16px; }
.sets td div svg { width: 16px; height: 14px; flex: none; margin-left: 1px; }
.sets td span { flex: 1; padding-left: 2px; margin-left: 3px; }
.sets .cjk td { font-size: 12px; }
.sets .dim span { color: #808080; }
.sets .chosen span { background: #b2b2b2; outline: 1px dotted #555; outline-offset: -1px; }
.fb svg { width: 11px; height: 14px; margin-left: 3px; }
.fs { padding: 6px 0 3px; }
.fs i { height: 361px; margin: 3px 0 auto; }
.tabs { flex: none; height: 24px; display: flex; align-items: flex-start; padding-left: 3px; }
.tabs button { height: 20px; line-height: 18px; margin-top: 2px; border: solid #777; border-width: 1px 0; border-top-color: #888; }
.tabs .t1 { width: 46px; color: #888; }
.tabs .t2 { width: 50px; height: 22px; border-top-color: transparent; }
.tabs .t3 { width: 47px; border-width: 1px 2px 2px 1px; }

.lower { flex: none; position: relative; padding-top: 7px; }
.out { margin: 5px 0 0; height: 69px; padding-bottom: 2px; border-bottom: 2px solid #777; display: flex; background: #fff; justify-content: flex-end; border-top: 2px solid #fff; }
.os { padding: 7px 0; justify-content: space-between; }
.cap.two { margin-top: 28px; padding-right: 0; }
.cap.two .pin { margin-right: -2px; }
.prog { margin-top: 2px; border-top: 2px solid #777; }
.prog th { height: 20px; line-height: 19px; }
.prog .a, .prog .c { border-right: 1px solid #999; border-bottom: 1px solid #999; }
.prog .a { width: 109px; text-indent: -6px; }
.prog .c { width: 60px; padding-left: 5px; }
.prog td { height: 28px; background: #fff; }
.foot { height: 44px; display: flex; justify-content: flex-end; gap: 8px; padding: 8px 4px 0 0; border-bottom: 2px solid #999; }
.foot button { width: 24px; height: 25px; display: grid; place-items: center; border: solid #aaa; border-width: 1px; border-top-color: #fff; border-left-color: #fff; }
.foot svg { width: 16px; height: 16px; }
.water { position: absolute; right: 19px; bottom: 3px; font: bold 16px/20px "DejaVu Sans", "Noto Sans CJK SC", sans-serif; color: #fff; -webkit-text-stroke: 3px #e01818; paint-order: stroke fill; white-space: nowrap; }
</style>
